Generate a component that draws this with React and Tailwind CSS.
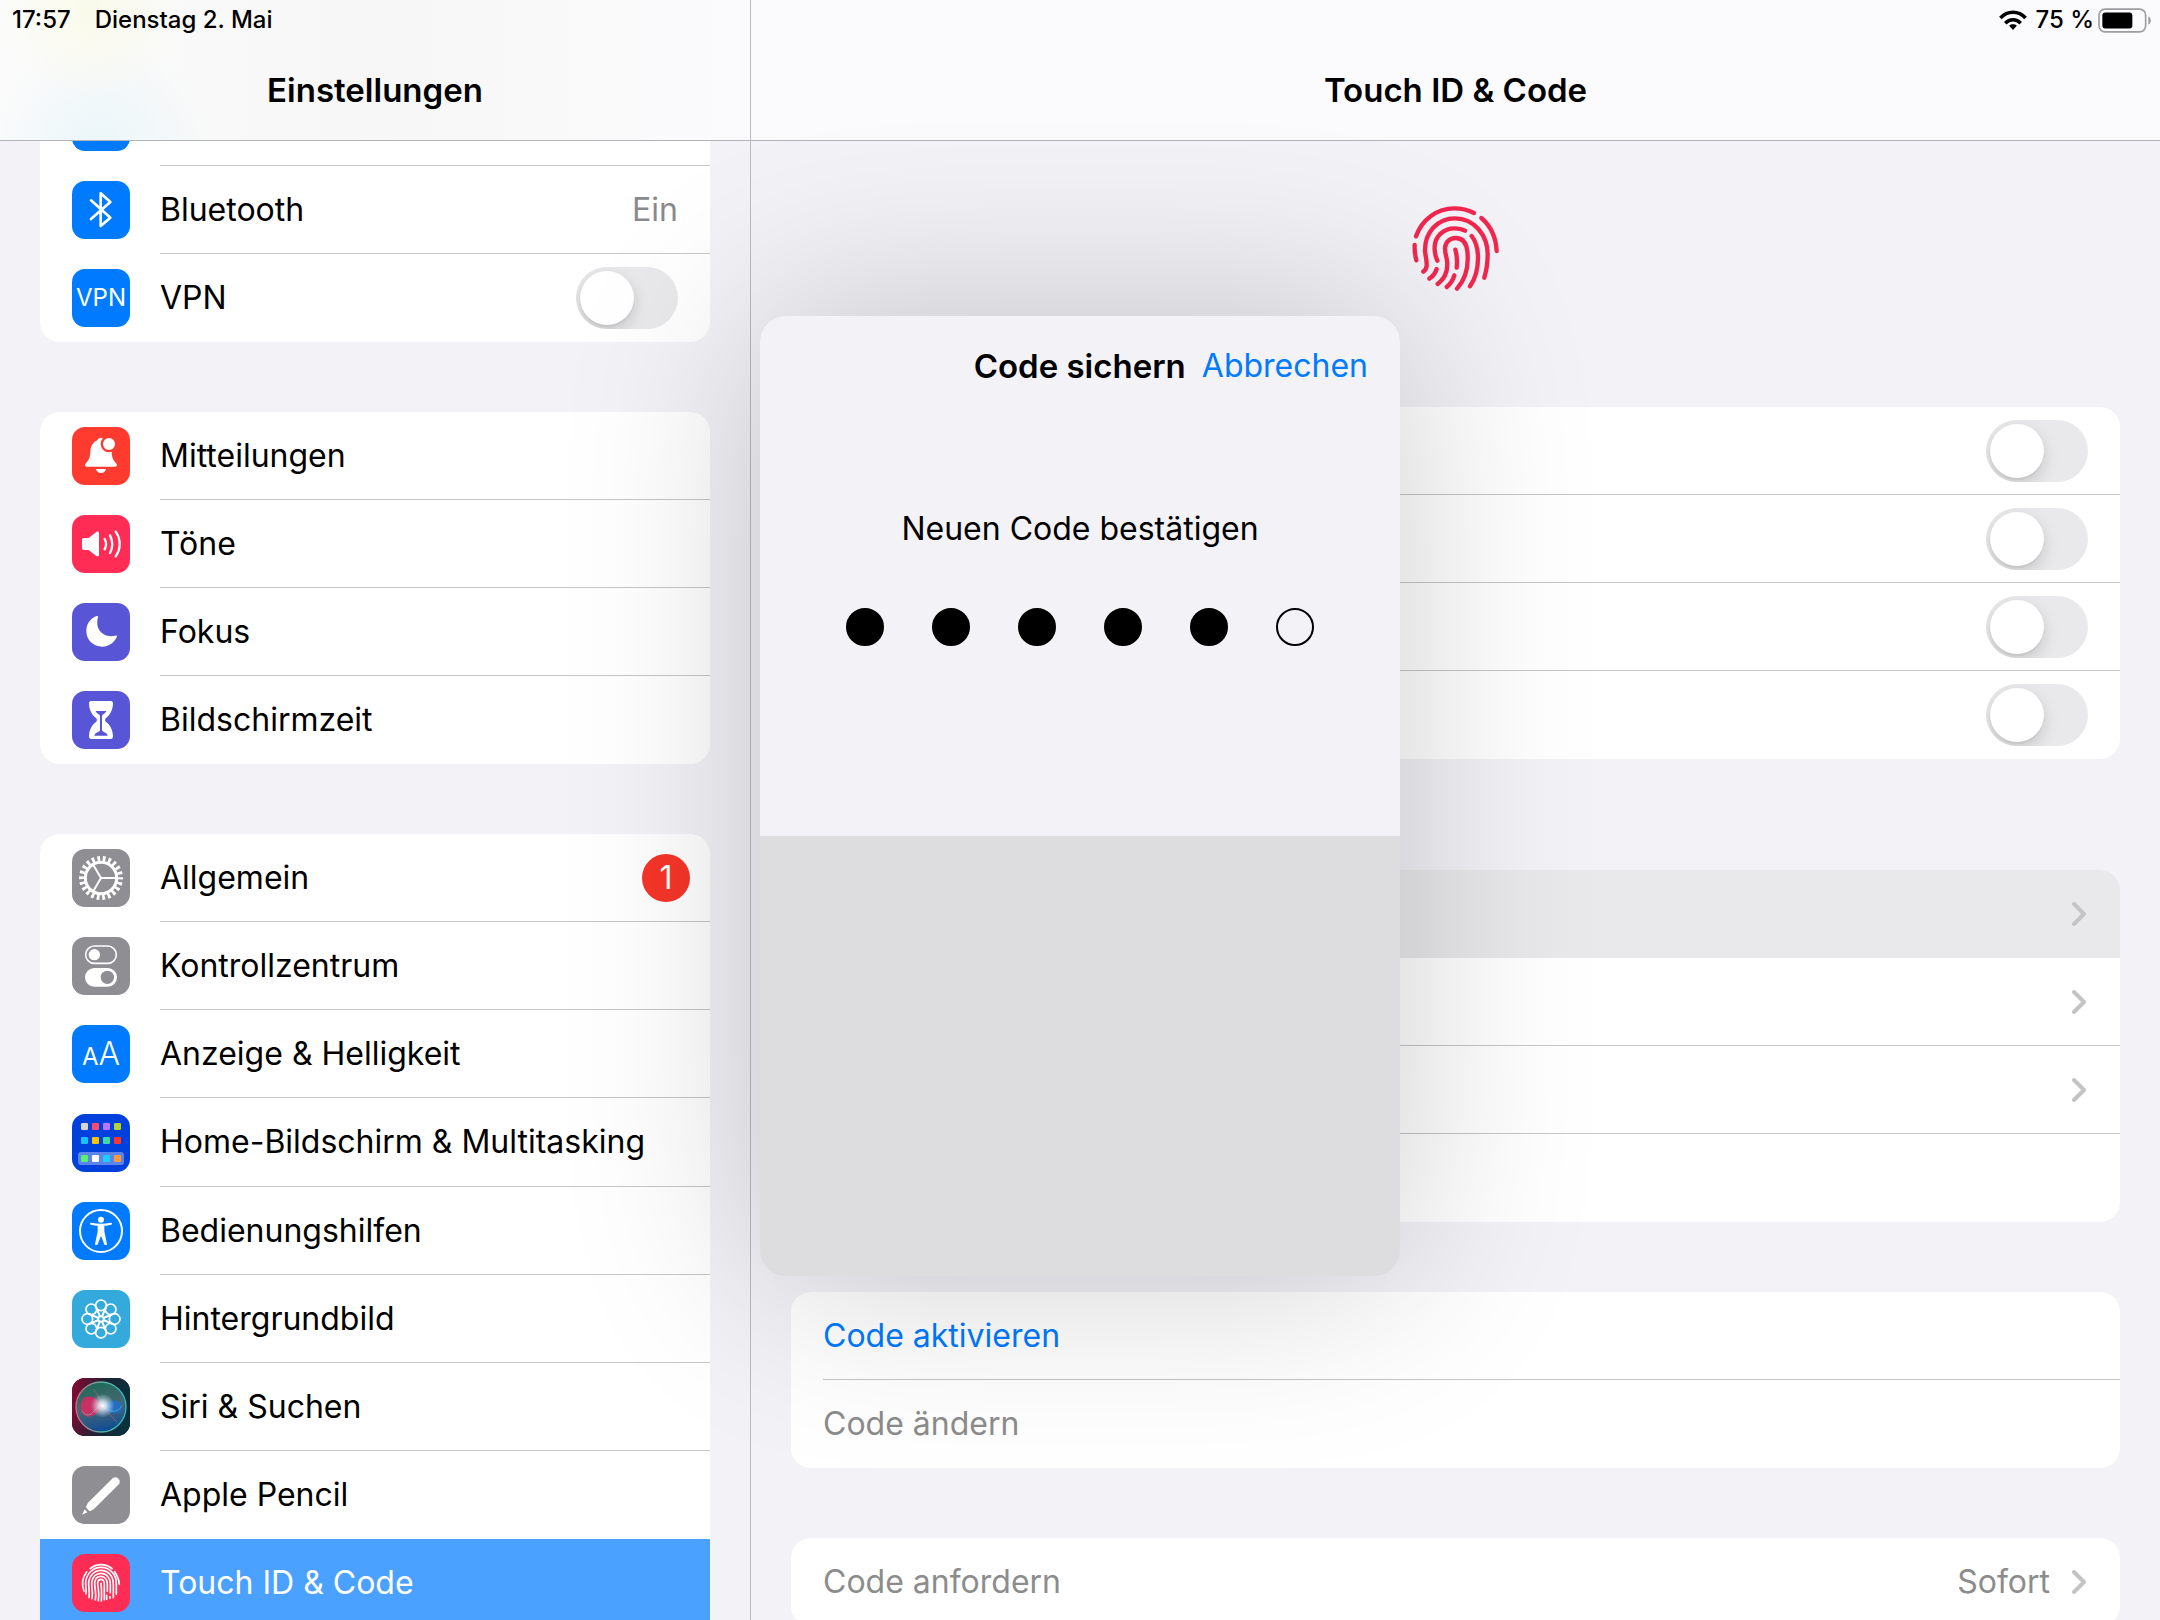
function IconTile({ bg, children }) {
  return (
    <span className={`flex h-[58px] w-[58px] shrink-0 items-center justify-center overflow-hidden rounded-[13px] ${bg}`}>
      {children}
    </span>
  )
}

// all tile glyphs are drawn on a 174 unit grid
function Glyph({ children }) {
  return (
    <svg
      viewBox="0 0 174 174"
      className="h-full w-full"
      fill="none"
      stroke="#fff"
      strokeWidth="7"
      strokeLinecap="round"
      strokeLinejoin="round"
      aria-hidden="true"
    >
      {children}
    </svg>
  )
}

const petals = [0, 45, 90, 135, 180, 225, 270, 315]

const homeApps = [
  [27, 27, '#d6d6cc'],
  [60, 27, '#ff4d6a'],
  [93, 27, '#b678ff'],
  [126, 27, '#b4d335'],
  [27, 69, '#18c1ff'],
  [60, 69, '#ffc400'],
  [93, 69, '#3ddba9'],
  [126, 69, '#ff3528'],
  [27, 123, '#5bf06e'],
  [60, 123, '#ffffff'],
  [93, 123, '#18cfff'],
  [126, 123, '#ff9a3e'],
]

const icons = {
  bluetooth: (
    <IconTile bg="bg-[#007aff]">
      <Glyph>
        <path strokeWidth="8" d="M57 58L115 110L86 135V37L115 63L57 114" />
      </Glyph>
    </IconTile>
  ),
  vpn: (
    <IconTile bg="bg-[#007aff]">
      <span className="text-2xl text-white">VPN</span>
    </IconTile>
  ),
  bell: (
    <IconTile bg="bg-[#ff3b30]">
      <Glyph>
        <g stroke="none" fill="#fff">
          <path d="M46 119C38 119 37 112 43 107C52 98 54 90 55 75C56 55 64 45 76 40C78 35 82 32 87 32C92 32 96 35 98 40C112 46 118 58 119 75C120 90 122 98 131 107C137 112 136 119 128 119Z" />
          <path d="M72 126H102C100 134 95 138 87 138C79 138 74 134 72 126Z" />
          <circle cx="111" cy="51" r="25" fill="#ff3b30" />
          <circle cx="111" cy="51" r="18" />
        </g>
      </Glyph>
    </IconTile>
  ),
  sound: (
    <IconTile bg="bg-[#ff2d55]">
      <Glyph>
        <path
          stroke="none"
          fill="#fff"
          d="M37 69H50L73 51C77 48 81 50 81 54V120C81 124 77 126 73 123L50 105H37C32 105 30 103 30 99V75C30 71 32 69 37 69Z"
        />
        <path d="M98 72C103 81 103 94 98 103M114 61C123 77 123 99 114 114M131 50C147 72 147 102 131 124" />
      </Glyph>
    </IconTile>
  ),
  moon: (
    <IconTile bg="bg-[#5856d6]">
      <Glyph>
        <path
          stroke="none"
          fill="#fff"
          d="M74 39C76 38 79 40 78 43C68 78 92 106 130 98C134 97 136 99 134 103C126 120 110 131 91 131C64 131 43 111 43 84C43 63 55 46 74 39Z"
        />
      </Glyph>
    </IconTile>
  ),
  hourglass: (
    <IconTile bg="bg-[#5856d6]">
      <Glyph>
        <path
          stroke="none"
          fill="#fff"
          d="M58 30H116C121 30 123 33 123 38C122 58 113 72 103 80C98 84 98 90 103 94C114 102 122 116 123 134C123 140 121 144 116 144H58C53 144 51 140 51 134C52 116 60 102 71 94C76 90 76 84 71 80C61 72 52 58 51 38C51 33 53 30 58 30Z"
        />
        <path
          stroke="none"
          fill="#5856d6"
          d="M71 60H103C101 68 91 68 90 76V118C92 125 106 124 107 134H67C68 124 82 125 84 118V76C83 68 73 68 71 60Z"
        />
      </Glyph>
    </IconTile>
  ),
  gear: (
    <IconTile bg="bg-[#8e8e93]">
      <Glyph>
        <circle cx="87" cy="87" r="47" strokeWidth="9" />
        <circle cx="87" cy="87" r="58" strokeWidth="16" strokeLinecap="butt" pathLength="220" strokeDasharray="5 5" strokeDashoffset="2.5" />
        <path strokeWidth="6" d="M87 87H133M87 87L64 48M87 87L64 126" />
      </Glyph>
    </IconTile>
  ),
  control: (
    <IconTile bg="bg-[#8e8e93]">
      <Glyph>
        <rect x="41" y="27" width="92" height="52" rx="26" strokeWidth="5" />
        <circle cx="67" cy="53" r="17" fill="#fff" stroke="none" />
        <rect x="39" y="93" width="96" height="56" rx="28" fill="#fff" stroke="none" />
        <circle cx="106" cy="121" r="20" fill="#8e8e93" stroke="none" />
      </Glyph>
    </IconTile>
  ),
  display: (
    <IconTile bg="bg-[#007aff]">
      <span className="flex items-baseline text-white">
        <span className="text-2xl">A</span>
        <span className="text-[32px] leading-10 font-light">A</span>
      </span>
    </IconTile>
  ),
  home: (
    <IconTile bg="bg-[#0040dd]">
      <Glyph>
        <rect x="18" y="114" width="138" height="39" rx="10" fill="#fff" fillOpacity="0.36" stroke="none" />
        {homeApps.map(([x, y, color]) => (
          <rect key={`${x}-${y}`} x={x} y={y} width="21" height="21" rx="4" fill={color} stroke="none" />
        ))}
      </Glyph>
    </IconTile>
  ),
  accessibility: (
    <IconTile bg="bg-[#007aff]">
      <Glyph>
        <circle cx="87" cy="87" r="63" strokeWidth="6" />
        <circle cx="87" cy="53" r="9" fill="#fff" stroke="none" />
        <path strokeWidth="6" d="M57 65C78 70 96 70 117 65" />
        <path fill="#fff" strokeWidth="4" d="M79 70H95L95 88L103 127L99 127L88 98H86L75 127L71 127L79 88Z" />
      </Glyph>
    </IconTile>
  ),
  flower: (
    <IconTile bg="bg-[#34aadc]">
      <Glyph>
        {petals.map((deg) => (
          <g key={deg} transform={`rotate(${deg} 87 87)`} strokeWidth="5">
            <circle cx="87" cy="46" r="16" />
            <path d="M72 51L84 78M102 51L90 78" />
          </g>
        ))}
        <circle cx="87" cy="87" r="8" strokeWidth="5" />
      </Glyph>
    </IconTile>
  ),
  siri: (
    <IconTile bg="bg-[#10242b]">
      <Glyph>
        <defs>
          <linearGradient id="siriBg" x1="0" y1="0.4" x2="1" y2="0.6">
            <stop offset="0" stopColor="#7d0a33" />
            <stop offset="0.5" stopColor="#1b2433" />
            <stop offset="1" stopColor="#08323e" />
          </linearGradient>
          <linearGradient id="siriOrb" x1="0.4" y1="0" x2="0.6" y2="1">
            <stop offset="0" stopColor="#1c6a58" />
            <stop offset="0.5" stopColor="#4a6672" />
            <stop offset="1" stopColor="#0a4c96" />
          </linearGradient>
          <linearGradient id="siriRing" x1="0" y1="0.5" x2="1" y2="0.5">
            <stop offset="0" stopColor="#e0627f" />
            <stop offset="0.5" stopColor="#5fae9e" />
            <stop offset="1" stopColor="#2fb7c9" />
          </linearGradient>
          <radialGradient id="siriGlow">
            <stop offset="0" stopColor="#fff" />
            <stop offset="0.35" stopColor="#e8f7ff" stopOpacity="0.75" />
            <stop offset="1" stopColor="#bfe6ff" stopOpacity="0" />
          </radialGradient>
        </defs>
        <rect width="174" height="174" fill="url(#siriBg)" stroke="none" />
        <circle cx="87" cy="87" r="75" fill="url(#siriOrb)" stroke="url(#siriRing)" strokeWidth="4" />
        <path stroke="none" fill="#e02862" fillOpacity="0.85" d="M92 86C70 46 30 46 27 80C22 118 58 134 92 86Z" />
        <path stroke="none" fill="#1e6fd8" fillOpacity="0.75" d="M90 86C116 60 144 62 150 84C152 112 118 116 90 86Z" />
        <path stroke="#5fd6c8" strokeOpacity="0.6" strokeWidth="3" d="M30 100C60 140 80 60 96 82C116 110 140 100 150 84" />
        <path stroke="#e0627f" strokeOpacity="0.5" strokeWidth="3" d="M64 34C80 50 84 70 98 92L134 132" />
        <circle cx="92" cy="83" r="36" fill="url(#siriGlow)" stroke="none" />
      </Glyph>
    </IconTile>
  ),
  pencil: (
    <IconTile bg="bg-[#8e8e93]">
      <Glyph>
        <path stroke="none" fill="#fff" d="M122 37C132 28 148 41 142 53L66 129L54 136C50 132 44 128 42 122L48 110Z" />
        <path stroke="none" fill="#fff" d="M38 130L46 139L30 146Z" />
      </Glyph>
    </IconTile>
  ),
  touch: (
    <IconTile bg="bg-[#ff2d55]">
      <Glyph>
        <g strokeWidth="5">
          <path d="M55 44C73 28 101 28 120 44M44 54C30 72 28 90 36 111M128 53C137 66 141 76 142 91" />
          <path d="M42 120C44 106 40 96 41 86C43 58 64 40 87 40C113 40 133 60 133 88V121" />
          <path d="M51 131C54 112 49 98 50 86C52 64 68 49 87 49C108 49 124 66 124 90V131" />
          <path d="M60 134C64 112 58 98 59 86C60 69 72 58 87 58C104 58 115 72 115 90V116M114 128V133" />
          <path d="M70 138C74 114 67 98 68 86C69 74 77 67 87 67C98 67 106 77 106 91V112M104 124V136" />
          <path d="M79 140C84 112 76 98 77 86C78 79 82 76 87 76C93 76 97 82 97 92V137" />
          <path d="M87 88C89 104 89 122 88 141" />
        </g>
      </Glyph>
    </IconTile>
  ),
}

const sidebarGroups = [
  [
    { icon: 'bell', label: 'Mitteilungen' },
    { icon: 'sound', label: 'Töne' },
    { icon: 'moon', label: 'Fokus' },
    { icon: 'hourglass', label: 'Bildschirmzeit' },
  ],
  [
    { icon: 'gear', label: 'Allgemein', badge: 1 },
    { icon: 'control', label: 'Kontrollzentrum' },
    { icon: 'display', label: 'Anzeige & Helligkeit' },
    { icon: 'home', label: 'Home-Bildschirm & Multitasking', tall: true },
    { icon: 'accessibility', label: 'Bedienungshilfen' },
    { icon: 'flower', label: 'Hintergrundbild' },
    { icon: 'siri', label: 'Siri & Suchen' },
    { icon: 'pencil', label: 'Apple Pencil' },
    { icon: 'touch', label: 'Touch ID & Code', active: true },
  ],
]

function Toggle({ label, id }) {
  return (
    <input
      id={id}
      type="checkbox"
      role="switch"
      aria-label={label}
      className="h-[62px] w-[102px] shrink-0 appearance-none overflow-hidden rounded-full bg-[#e9e9eb] p-1 before:block before:h-[54px] before:w-[54px] before:rounded-full before:bg-white before:shadow-[0_6px_16px_rgba(0,0,0,0.15),0_2px_2px_rgba(0,0,0,0.06)] checked:bg-[#34c759] checked:pl-11"
    />
  )
}

function Chevron() {
  return (
    <svg viewBox="0 0 14 24" className="mr-0.5 h-6 w-3.5 shrink-0" fill="none" stroke="#c4c4c6" strokeWidth="4" strokeLinecap="round" strokeLinejoin="round" aria-hidden="true">
      <path d="M2 2L12 12L2 22" />
    </svg>
  )
}

function SidebarLink({ item, divider }) {
  return (
    <a
      href="#"
      className={`flex items-center gap-[30px] pl-8 ${item.tall ? 'h-[89px]' : 'h-[88px]'} ${item.active ? 'bg-[#4ba1ff] text-white' : ''}`}
    >
      {icons[item.icon]}
      <span className={`flex h-full flex-1 items-center justify-between pr-5 ${divider ? 'border-b border-[#c6c6c8]' : ''}`}>
        {item.label}
        {item.badge ? (
          <span className="flex h-12 w-12 items-center justify-center rounded-full bg-[#f73529] text-white">{item.badge}</span>
        ) : null}
      </span>
    </a>
  )
}

function Sidebar() {
  return (
    <aside className="flex w-[751px] shrink-0 flex-col border-r border-[#bcbcc0]">
      <header className="flex h-[141px] shrink-0 items-end justify-center border-b border-[#b4b4b8] bg-[#f8f8f8] bg-[radial-gradient(circle_at_90px_10px,#fafaea_0,#fafaea00_90px),radial-gradient(circle_at_100px_150px,#eaf6fa_0,#eaf6fa00_110px),linear-gradient(to_right,#fbfbfb,#f7f7f7_50%,#fbfbfd)] pb-[30px]">
        <h1 className="text-[33px] leading-10 font-semibold">Einstellungen</h1>
      </header>
      <div className="flex min-h-0 flex-1 flex-col gap-[70px] overflow-hidden px-10">
        <div className="shrink-0 rounded-b-[20px] bg-white">
          {/* row scrolled under the header */}
          <div className="flex h-[25px] items-end gap-[30px] overflow-hidden pl-8">
            <span className="mb-[15px] h-[58px] w-[58px] shrink-0 rounded-[13px] bg-[#007aff]" />
            <span className="h-full flex-1 border-b border-[#c6c6c8]" />
          </div>
          <a href="#" className="flex h-[88px] items-center gap-[30px] pl-8">
            {icons.bluetooth}
            <span className="flex h-full flex-1 items-center justify-between border-b border-[#c6c6c8] pr-8">
              Bluetooth
              <span className="text-[#8a8a8e]">Ein</span>
            </span>
          </a>
          <div className="flex h-[88px] items-center gap-[30px] pl-8">
            {icons.vpn}
            <label htmlFor="vpn" className="flex-1">
              VPN
            </label>
            <span className="flex pr-8">
              <Toggle id="vpn" />
            </span>
          </div>
        </div>
        {sidebarGroups.map((group, i) => (
          <nav
            key={i}
            className={`shrink-0 overflow-hidden bg-white ${i === sidebarGroups.length - 1 ? 'rounded-t-[20px]' : 'rounded-[20px]'}`}
          >
            {group.map((item, j) => (
              <SidebarLink key={item.label} item={item} divider={j < group.length - 1 && !group[j + 1].active} />
            ))}
          </nav>
        ))}
      </div>
    </aside>
  )
}

function TouchIdIcon() {
  return (
    <svg viewBox="92 74 270 264" className="h-[88px] w-[90px]" fill="none" stroke="#f2264e" strokeWidth="13" strokeLinecap="round" aria-hidden="true">
      <path d="M107 168C125 117 170 84 222 84C243 84 262 88 281 98" />
      <path d="M303 113C330 136 347 172 349 212" />
      <path d="M103 194C102 210 104 224 108 240" />
      <path d="M129 274C147 262 136 235 134 212C133 155 172 114 224 114C282 114 322 165 322 222C322 250 318 272 312 292" />
      <path d="M171 241C164 225 162 215 163 200C164 168 190 144 222 144C234 144 245 146 254 151" />
      <path d="M274 167C288 185 293 208 293 232C293 265 285 295 269 318" />
      <path d="M172 311C200 290 204 262 199 235C196 222 194 215 194 204C195 186 208 173 226 173C248 173 258 190 261 212C266 258 256 296 230 325" />
      <path d="M225 208C230 225 231 243 229 262" />
      <path d="M169 266C165 279 158 288 147 295" />
      <path d="M222 285C218 299 210 311 199 320" />
    </svg>
  )
}

const detailRows = [
  { name: 'first', selected: true, chevron: true },
  { name: 'second', chevron: true },
  { name: 'third', chevron: true },
  { name: 'fourth' },
]

function Detail() {
  return (
    <main className="flex min-w-0 flex-1 flex-col">
      <header className="flex h-[141px] shrink-0 items-end justify-center border-b border-[#b4b4b8] bg-[#fbfbfd] pb-[30px]">
        <h2 className="text-[33px] leading-10 font-semibold">Touch ID &amp; Code</h2>
      </header>
      <div className="flex min-h-0 flex-1 flex-col overflow-hidden px-10">
        <div className="flex h-[266px] shrink-0 justify-center pt-16">
          <TouchIdIcon />
        </div>
        <section className="shrink-0 rounded-[20px] bg-white pl-8">
          {[1, 2, 3, 4].map((n) => (
            <div key={n} className={`flex h-[88px] items-center justify-end pr-8 ${n < 4 ? 'border-b border-[#c6c6c8]' : ''}`}>
              <Toggle label={`Touch ID ${n}`} />
            </div>
          ))}
        </section>
        <section className="mt-[111px] shrink-0 overflow-hidden rounded-[20px] bg-white">
          {detailRows.map((row) => (
            <div key={row.name} className={`pl-8 ${row.selected ? 'bg-[#e9e9eb]' : ''}`}>
              <div className={`flex h-[88px] items-center justify-end pr-8 ${row.chevron && !row.selected ? 'border-b border-[#c6c6c8]' : ''}`}>
                {row.chevron ? <Chevron /> : null}
              </div>
            </div>
          ))}
        </section>
        <section className="mt-[70px] flex shrink-0 flex-col rounded-[20px] bg-white pl-8">
          <button className="h-[88px] border-b border-[#c6c6c8] text-left text-[#007aff]">Code aktivieren</button>
          <button className="h-[88px] text-left text-[#8c8c8c]" disabled>
            Code ändern
          </button>
        </section>
        <button className="mt-[70px] flex h-[88px] shrink-0 items-center rounded-[20px] bg-white px-8 text-left text-[#8c8c8c]">
          <span className="flex-1">Code anfordern</span>
          <span className="mr-[22px]">Sofort</span>
          <Chevron />
        </button>
      </div>
    </main>
  )
}

function StatusBar() {
  return (
    <div className="absolute inset-x-0 top-0 flex h-10 items-center justify-between pr-2 pl-3 text-2xl font-medium">
      <span className="flex gap-6">
        <span>17:57</span>
        <span>Dienstag 2. Mai</span>
      </span>
      <span className="flex items-center">
        <svg viewBox="114 28 84 62" className="mr-2 h-5 w-7" fill="none" stroke="#000" strokeWidth="11" aria-hidden="true">
          <path d="M117 53C139 29 173 29 195 53" />
          <path d="M132 69C146 55 166 55 180 69" />
          <path stroke="none" fill="#000" d="M144 77C151 71 161 71 168 77L156 90Z" />
        </svg>
        75 %
        <svg viewBox="410 23 162 74" className="ml-1 h-[25px] w-[54px]" aria-hidden="true">
          <rect x="413" y="26" width="140" height="68" rx="18" fill="none" stroke="#9d9d9f" strokeWidth="5" />
          <rect x="423" y="36" width="90" height="48" rx="9" />
          <path d="M561 48C571 50 571 70 561 72Z" fill="#9d9d9f" />
        </svg>
      </span>
    </div>
  )
}

function PasscodeDialog() {
  return (
    <div
      role="dialog"
      aria-labelledby="passcode-title"
      className="absolute top-[316px] left-1/2 flex h-[960px] w-[640px] -translate-x-1/2 flex-col overflow-hidden rounded-[26px] bg-[#dddddf] shadow-[0_0_200px_rgba(0,0,0,0.2)]"
    >
      <div className="flex h-[520px] flex-col items-center bg-[#f2f2f7]">
        <div className="flex h-[100px] w-full items-center justify-end gap-4 pr-8">
          <h2 id="passcode-title" className="text-[33px] font-semibold">
            Code sichern
          </h2>
          <button className="text-[#007aff]">Abbrechen</button>
        </div>
        <p className="mt-[92px]">Neuen Code bestätigen</p>
        <div role="img" aria-label="5 / 6" className="mt-[58px] flex gap-12">
          {[1, 2, 3, 4, 5, 6].map((n) => (
            <span key={n} className={`h-[38px] w-[38px] rounded-full border-2 border-black ${n < 6 ? 'bg-black' : ''}`} />
          ))}
        </div>
      </div>
    </div>
  )
}

export default function App() {
  return (
    <div className="relative flex h-screen overflow-hidden bg-[#f2f2f7] font-['Inter',sans-serif] text-[32px] leading-[42px] text-black">
      <Sidebar />
      <Detail />
      <StatusBar />
      <PasscodeDialog />
    </div>
  )
}
